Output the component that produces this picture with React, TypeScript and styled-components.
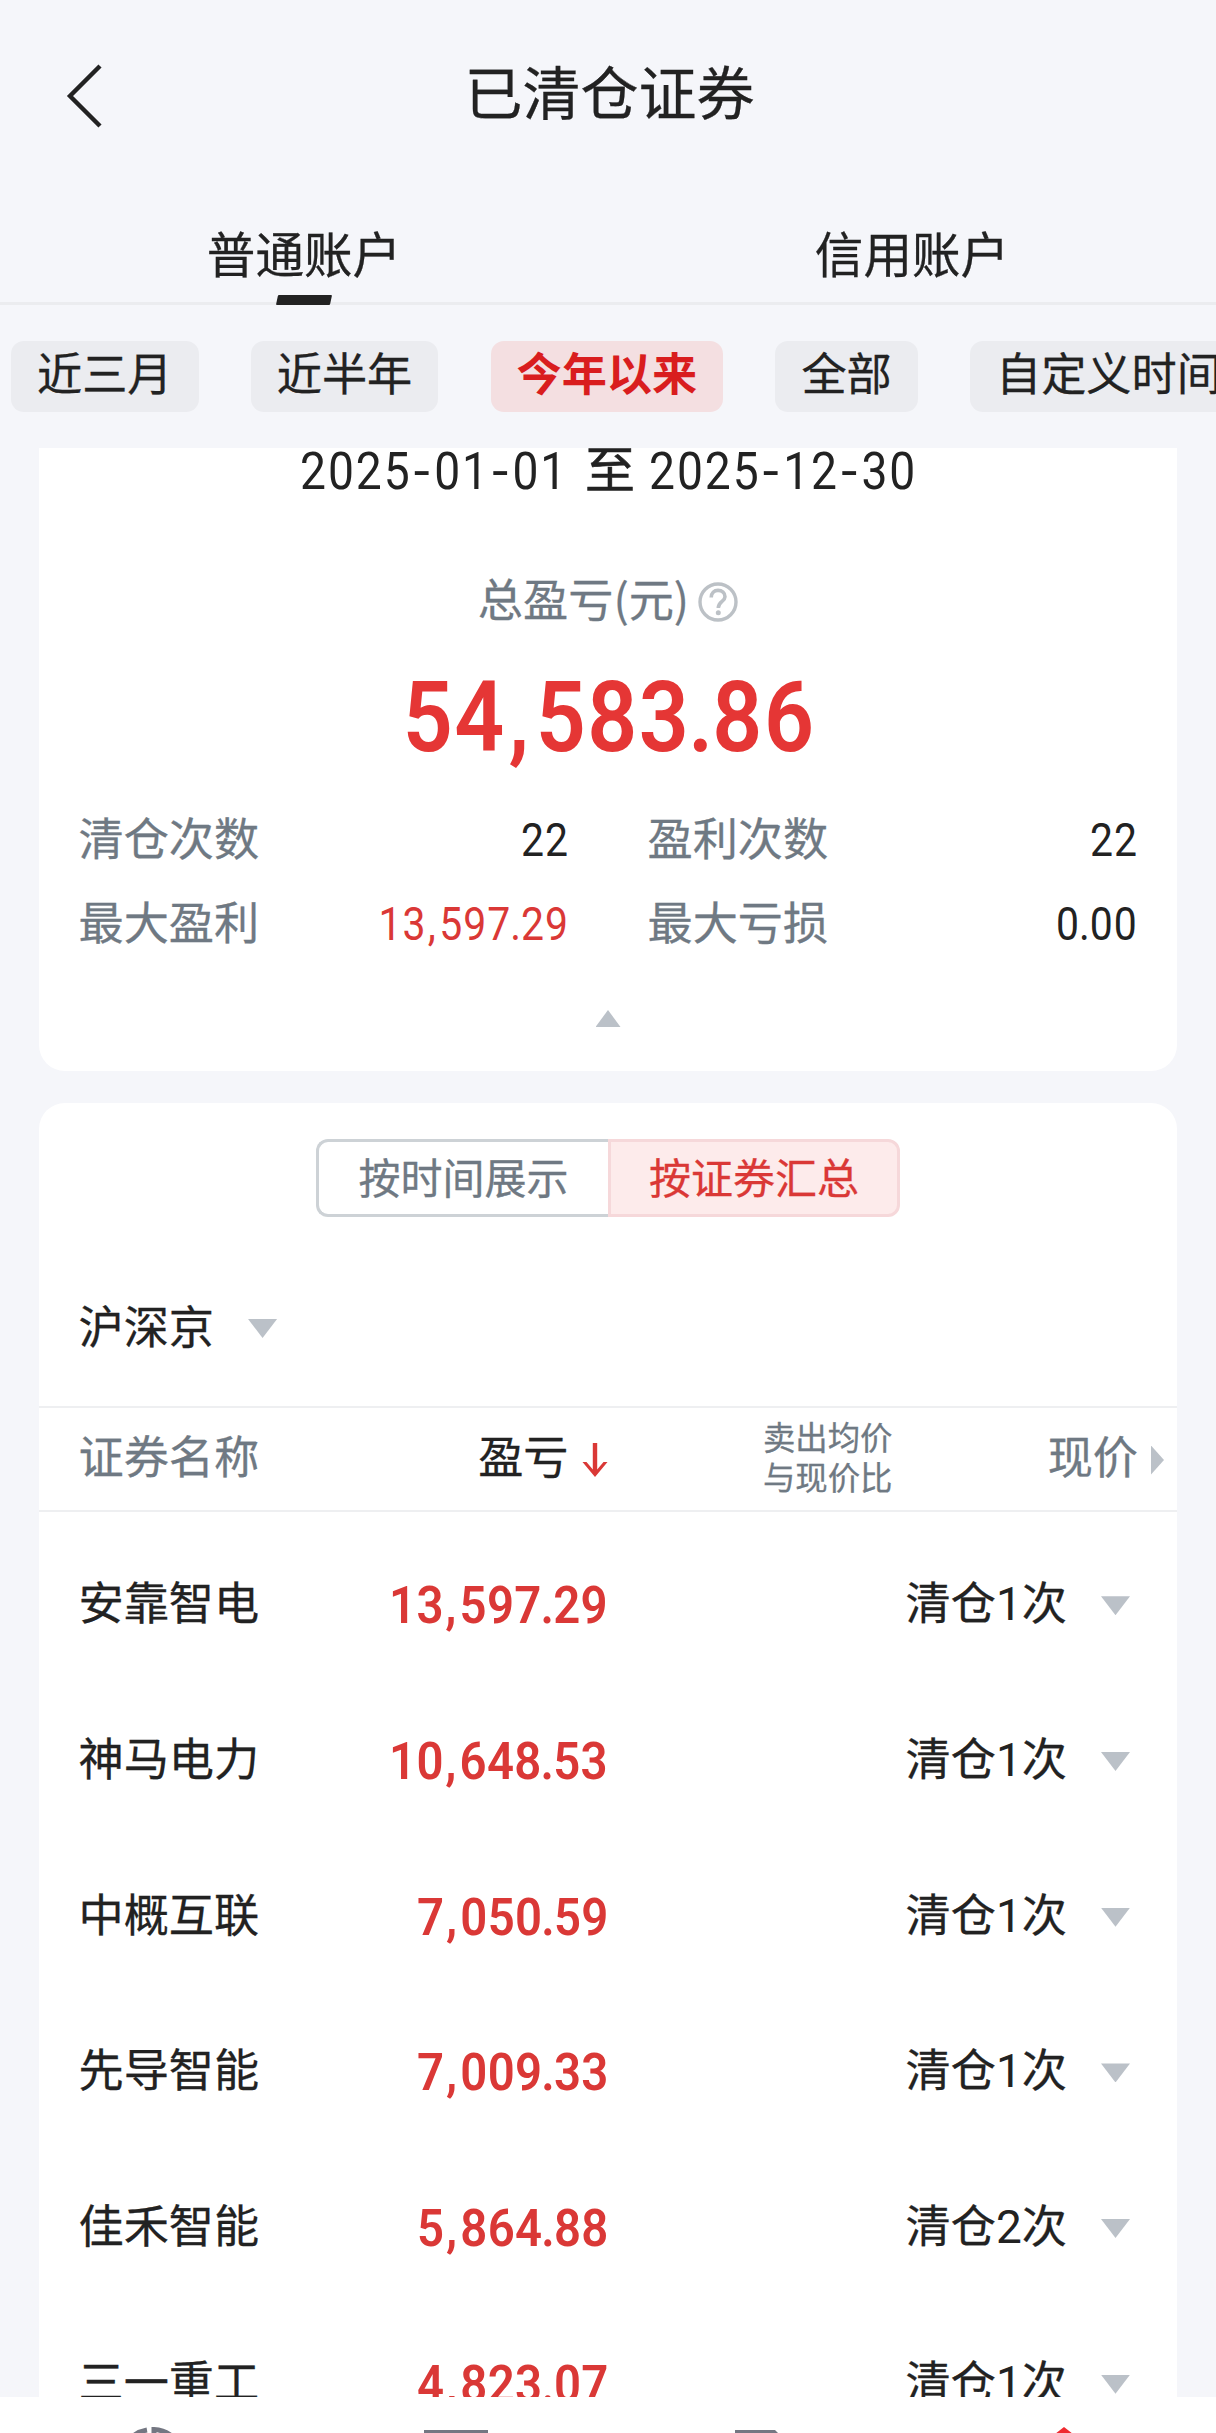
import React from "react";
import styled, { createGlobalStyle, css } from "styled-components";

const INK = "#222222";
const MUTED = "#6f7983";
const RED = "#da3836";
const SHADE = "#bbc1c8";

const GlobalStyle = createGlobalStyle`
  * { box-sizing: border-box; }
  body {
    margin: 0;
    background: #f5f6fa;
    color: ${INK};
    font-family: "Noto Sans CJK SC", sans-serif;
    -webkit-font-smoothing: antialiased;
    -webkit-text-stroke-width: 0.3px;
  }
`;

const Screen = styled.div`
  width: 1216px;
  height: 2433px;
  display: flex;
  flex-direction: column;
  overflow: hidden;
  background: #f5f6fa;
`;

const TitleBar = styled.header`
  height: 206px;
  flex: none;
  display: grid;
  grid-template-columns: 172px 1fr 169px;
  padding-top: 60px;
`;

const BackButton = styled.div`
  padding: 4px 0 0 66px;
  line-height: 0;
`;

const Title = styled.h1`
  margin: 0;
  font-size: 58px;
  line-height: 60px;
  font-weight: 400;
  text-align: center;
`;

const Tabs = styled.nav`
  height: 99px;
  flex: none;
  display: flex;
  border-bottom: 3px solid #ebecef;
`;

const Tab = styled.div`
  flex: 1;
  height: 99px;
  display: flex;
  flex-direction: column;
  justify-content: space-between;
  align-items: center;
  padding-top: 16px;
  font-size: 48.6px;
  line-height: 60px;
`;

const TabMarker = styled.span`
  width: 54px;
  height: 10px;
  border-radius: 1px;
  background: ${INK};
  transform: skewX(-12deg);
`;

const Chips = styled.div`
  height: 143px;
  flex: none;
  display: flex;
  align-items: flex-start;
  gap: 52.2px;
  padding: 36px 0 0 11px;
  overflow: hidden;
`;

const Chip = styled.div<{ $active?: boolean }>`
  flex: none;
  height: 71px;
  padding: 0 26px;
  border-radius: 13px;
  background: ${(p) => (p.$active ? "#f4dfe1" : "#ebecf0")};
  color: ${(p) => (p.$active ? "#d91d1e" : INK)};
  font-size: 45.2px;
  line-height: 62px;
  font-weight: ${(p) => (p.$active ? 700 : 400)};
  -webkit-text-stroke-width: ${(p) => (p.$active ? 0 : 0.3)}px;
  white-space: nowrap;
`;

const Content = styled.main`
  flex: 1;
  min-height: 0;
  padding: 0 39px;
  display: flex;
  flex-direction: column;
  gap: 32px;
  overflow: hidden;
`;

const SummaryCard = styled.section`
  height: 623px;
  flex: none;
  display: flex;
  flex-direction: column;
  align-items: center;
  background: #fff;
  border-radius: 0 0 26px 26px;
  overflow: hidden;
`;

const DateRange = styled.div`
  height: 122px;
  display: flex;
  justify-content: center;
  padding-left: 2px;
  font-size: 50px;
  line-height: 36px;
`;

/* Condensed figures: the glyphs are narrowed and re-spaced. */
const figures = css`
  font-family: Roboto, sans-serif;
  white-space: nowrap;
  -webkit-text-stroke-width: 0;
`;

const DateText = styled.span`
  ${figures}
  display: block;
  width: 269px;
  font-size: 52.5px;
  line-height: 47px;
  letter-spacing: 2.2px;
  transform: scaleX(0.88);
  transform-origin: left;
`;

const Dash = styled.span`
  display: inline-block;
  width: 25.6px;
  text-align: center;
  transform: scaleX(1.25);
`;

const DateJoin = styled.span`
  margin: 0 14px 0 16px;
  -webkit-text-stroke-width: 0.6px;
`;

const TotalLabel = styled.div`
  height: 62px;
  display: flex;
  align-items: center;
  gap: 9px;
  color: ${MUTED};
  font-size: 45.2px;
  line-height: 60px;
`;

const TotalText = styled.span`
  padding-bottom: 6px;
`;

const HelpIcon = styled.svg`
  margin-top: 2px;
`;

const Total = styled.div`
  ${figures}
  height: 175px;
  color: #e53635;
  font-size: 98px;
  line-height: 171px;
  font-weight: 600;
  letter-spacing: 1.6px;
  text-indent: 1.6px;
  transform: scaleX(0.895);
`;

const Mark = styled.span<{ $mark: string }>`
  margin-left: ${(p) => (p.$mark === "," ? 0.03 : -0.025)}em;
  margin-right: ${(p) => (p.$mark === "," ? 0.06 : -0.025)}em;
`;

const Stats = styled.div`
  width: 100%;
  display: grid;
  grid-template-columns: 490.5px 490.5px;
  column-gap: 78.5px;
  grid-auto-rows: 84px;
  padding-left: 39.5px;
`;

const Stat = styled.div`
  display: flex;
  justify-content: space-between;
  font-size: 45.2px;
  line-height: 59px;
  color: ${MUTED};
`;

const StatValue = styled.span<{ $gain?: boolean }>`
  ${figures}
  color: ${(p) => (p.$gain ? RED : INK)};
  font-size: 46px;
  line-height: 66px;
  letter-spacing: 1.1px;
  transform: scaleX(0.89);
  transform-origin: right;
`;

const Triangle = styled.i<{ $dir: "up" | "down" | "right" }>`
  display: block;
  flex: none;
  width: ${(p) => ({ up: 25, down: 29, right: 13 })[p.$dir]}px;
  height: ${(p) => ({ up: 17, down: 19, right: 29 })[p.$dir]}px;
  background: ${SHADE};
  clip-path: ${(p) =>
    ({
      up: "polygon(50% 0, 100% 100%, 0 100%)",
      down: "polygon(0 0, 100% 0, 50% 100%)",
      right: "polygon(0 0, 100% 50%, 0 100%)",
    })[p.$dir]};
`;

const Collapse = styled.div`
  padding-top: 35px;
`;

const ListCard = styled.section`
  flex: 1;
  min-height: 0;
  display: flex;
  flex-direction: column;
  background: #fff;
  border-radius: 26px 26px 0 0;
  overflow: hidden;
`;

const Switcher = styled.div`
  flex: none;
  display: flex;
  align-self: center;
  width: 584px;
  height: 78px;
  margin-top: 36px;
`;

const SwitchOption = styled.div<{ $active?: boolean }>`
  width: 50%;
  border: 3px solid ${(p) => (p.$active ? "#f6d8da" : "#cdd2d6")};
  border-radius: ${(p) => (p.$active ? "0 12px 12px 0" : "12px 0 0 12px")};
  ${(p) => !p.$active && "border-right: 0;"}
  background: ${(p) => (p.$active ? "#fdebeb" : "#fff")};
  color: ${(p) => (p.$active ? RED : MUTED)};
  font-size: 42px;
  line-height: 68px;
  text-align: center;
`;

const Market = styled.div`
  height: 191px;
  flex: none;
  display: flex;
  align-items: center;
  gap: 34px;
  padding: 30px 39.5px 0;
  border-bottom: 2px solid #eeeff1;
  font-size: 45.2px;
  line-height: 60px;
`;

const MarketName = styled.span`
  padding-bottom: 3px;
`;

const MarketArrow = styled.span`
  padding-top: 4px;
`;

const HeadRow = styled.div`
  height: 104px;
  flex: none;
  display: grid;
  grid-template-columns: 200px 329px 285px 271.5px;
  align-items: center;
  padding: 0 0 8px 39.5px;
  border-bottom: 2px solid #eeeff1;
  color: ${MUTED};
  font-size: 45.2px;
  line-height: 60px;
`;

const SortHead = styled.span`
  display: flex;
  align-items: center;
  justify-content: flex-end;
  gap: 13px;
  color: ${INK};
`;

const SortArrow = styled.svg`
  margin-top: 9px;
`;

const SmallHead = styled.span`
  padding-top: 1px;
  text-align: right;
  font-size: 32.4px;
  line-height: 39.5px;
`;

const PriceHead = styled.span`
  display: flex;
  align-items: center;
  justify-content: flex-end;
  gap: 13px;
`;

const MoreColumns = styled.span`
  padding-top: 10px;
`;

const Rows = styled.div`
  padding-top: 14px;
`;

const Row = styled.div`
  height: 155.7px;
  display: grid;
  grid-template-columns: 200px 330px 458.5px 63px;
  align-items: center;
  padding-left: 39.5px;
  font-size: 45.2px;
  line-height: 60px;
`;

const Name = styled.span`
  padding-bottom: 5px;
`;

const Profit = styled.span`
  ${figures}
  justify-self: end;
  padding-top: 3px;
  color: ${RED};
  font-size: 52.3px;
  font-weight: 600;
  letter-spacing: 0.4px;
  transform: scaleX(0.905);
  transform-origin: right;
`;

const Times = styled.span`
  justify-self: end;
  padding-bottom: 2px;
`;

const Count = styled.span`
  ${figures}
  font-size: 46px;
`;

const RowToggle = styled.span`
  display: flex;
  justify-content: flex-end;
  padding-top: 4px;
`;

const BottomBar = styled.footer`
  height: 36px;
  flex: none;
  display: grid;
  grid-template-columns: repeat(4, 1fr);
  justify-items: center;
  background: #fff;
  line-height: 0;
  overflow: hidden;
`;

const periods = ["近三月", "近半年", "今年以来", "全部", "自定义时间"];

const stats = [
  { label: "清仓次数", value: "22" },
  { label: "盈利次数", value: "22" },
  { label: "最大盈利", value: "13,597.29", gain: true },
  { label: "最大亏损", value: "0.00" },
];

const holdings = [
  { name: "安靠智电", profit: "13,597.29", times: 1 },
  { name: "神马电力", profit: "10,648.53", times: 1 },
  { name: "中概互联", profit: "7,050.59", times: 1 },
  { name: "先导智能", profit: "7,009.33", times: 1 },
  { name: "佳禾智能", profit: "5,864.88", times: 2 },
  { name: "三一重工", profit: "4,823.07", times: 1 },
];

function DateValue({ value }: { value: string }) {
  const [year, month, day] = value.split("-");
  return (
    <DateText>
      {year}
      <Dash>-</Dash>
      {month}
      <Dash>-</Dash>
      {day}
    </DateText>
  );
}

/* Separators carry their own side bearings. */
function Amount({ value }: { value: string }) {
  return (
    <>
      {value.split(/([,.])/).map((part, i) =>
        part === "," || part === "." ? (
          <Mark key={i} $mark={part}>
            {part}
          </Mark>
        ) : (
          part
        ),
      )}
    </>
  );
}

export default function App() {
  return (
    <Screen>
      <GlobalStyle />
      <TitleBar>
        <BackButton>
          <svg width="38" height="64" viewBox="0 0 38 64" fill="none">
            <path d="M34 2 L4 32 L34 62" stroke={INK} strokeWidth="4.4" />
          </svg>
        </BackButton>
        <Title>已清仓证券</Title>
      </TitleBar>

      <Tabs>
        <Tab>
          普通账户
          <TabMarker />
        </Tab>
        <Tab>信用账户</Tab>
      </Tabs>

      <Chips>
        {periods.map((p) => (
          <Chip key={p} $active={p === "今年以来"}>
            {p}
          </Chip>
        ))}
      </Chips>

      <Content>
        <SummaryCard>
          <DateRange>
            <DateValue value="2025-01-01" />
            <DateJoin>至</DateJoin>
            <DateValue value="2025-12-30" />
          </DateRange>
          <TotalLabel>
            <TotalText>总盈亏(元)</TotalText>
            <HelpIcon width="40" height="40" viewBox="0 0 40 40" fill="none" stroke="#bcc1c6">
              <circle cx="20" cy="20" r="18" strokeWidth="3.4" />
              <path
                d="M13.2 15.4 C13.2 10.8 16.2 8.4 20 8.4 C24 8.4 27 11 27 14.8 C27 19.6 20.3 19.4 20.3 26"
                strokeWidth="3.6"
              />
              <circle cx="20.3" cy="30.8" r="2.5" fill="#bcc1c6" stroke="none" />
            </HelpIcon>
          </TotalLabel>
          <Total>
            <Amount value="54,583.86" />
          </Total>
          <Stats>
            {stats.map((s) => (
              <Stat key={s.label}>
                {s.label}
                <StatValue $gain={s.gain}>
                  <Amount value={s.value} />
                </StatValue>
              </Stat>
            ))}
          </Stats>
          <Collapse>
            <Triangle $dir="up" />
          </Collapse>
        </SummaryCard>

        <ListCard>
          <Switcher>
            <SwitchOption>按时间展示</SwitchOption>
            <SwitchOption $active>按证券汇总</SwitchOption>
          </Switcher>
          <Market>
            <MarketName>沪深京</MarketName>
            <MarketArrow>
              <Triangle $dir="down" />
            </MarketArrow>
          </Market>
          <HeadRow>
            <span>证券名称</span>
            <SortHead>
              盈亏
              <SortArrow width="26" height="34" viewBox="0 0 26 34" fill={RED}>
                <path d="M10.8 0 H15.2 V26.5 L21.5 19 H25.5 L13 34 L0.5 19 H4.5 L10.8 26.5 Z" />
              </SortArrow>
            </SortHead>
            <SmallHead>
              卖出均价
              <br />
              与现价比
            </SmallHead>
            <PriceHead>
              现价
              <MoreColumns>
                <Triangle $dir="right" />
              </MoreColumns>
            </PriceHead>
          </HeadRow>
          <Rows>
            {holdings.map((h) => (
              <Row key={h.name}>
                <Name>{h.name}</Name>
                <Profit>
                  <Amount value={h.profit} />
                </Profit>
                <Times>
                  清仓<Count>{h.times}</Count>次
                </Times>
                <RowToggle>
                  <Triangle $dir="down" />
                </RowToggle>
              </Row>
            ))}
          </Rows>
        </ListCard>
      </Content>

      <BottomBar>
        <svg width="80" height="36" viewBox="0 0 80 36" fill="none" stroke="#747782" strokeWidth="5">
          <path d="M35 33 A31.5 31.5 0 0 0 9 64" />
          <path d="M42 64 V32.6 A31.5 31.5 0 0 1 72 64" />
        </svg>
        <svg width="80" height="36" viewBox="0 0 80 36">
          <path d="M8 33 H72 V36 H8 Z" fill="#747782" />
        </svg>
        <svg width="80" height="36" viewBox="0 0 80 36">
          <path d="M15 33 H55 L58 36 H15 Z" fill="#747782" />
        </svg>
        <svg width="80" height="36" viewBox="0 0 80 36">
          <path d="M40 30 L49 37 H31 Z" fill="#ef2b30" />
        </svg>
      </BottomBar>
    </Screen>
  );
}
